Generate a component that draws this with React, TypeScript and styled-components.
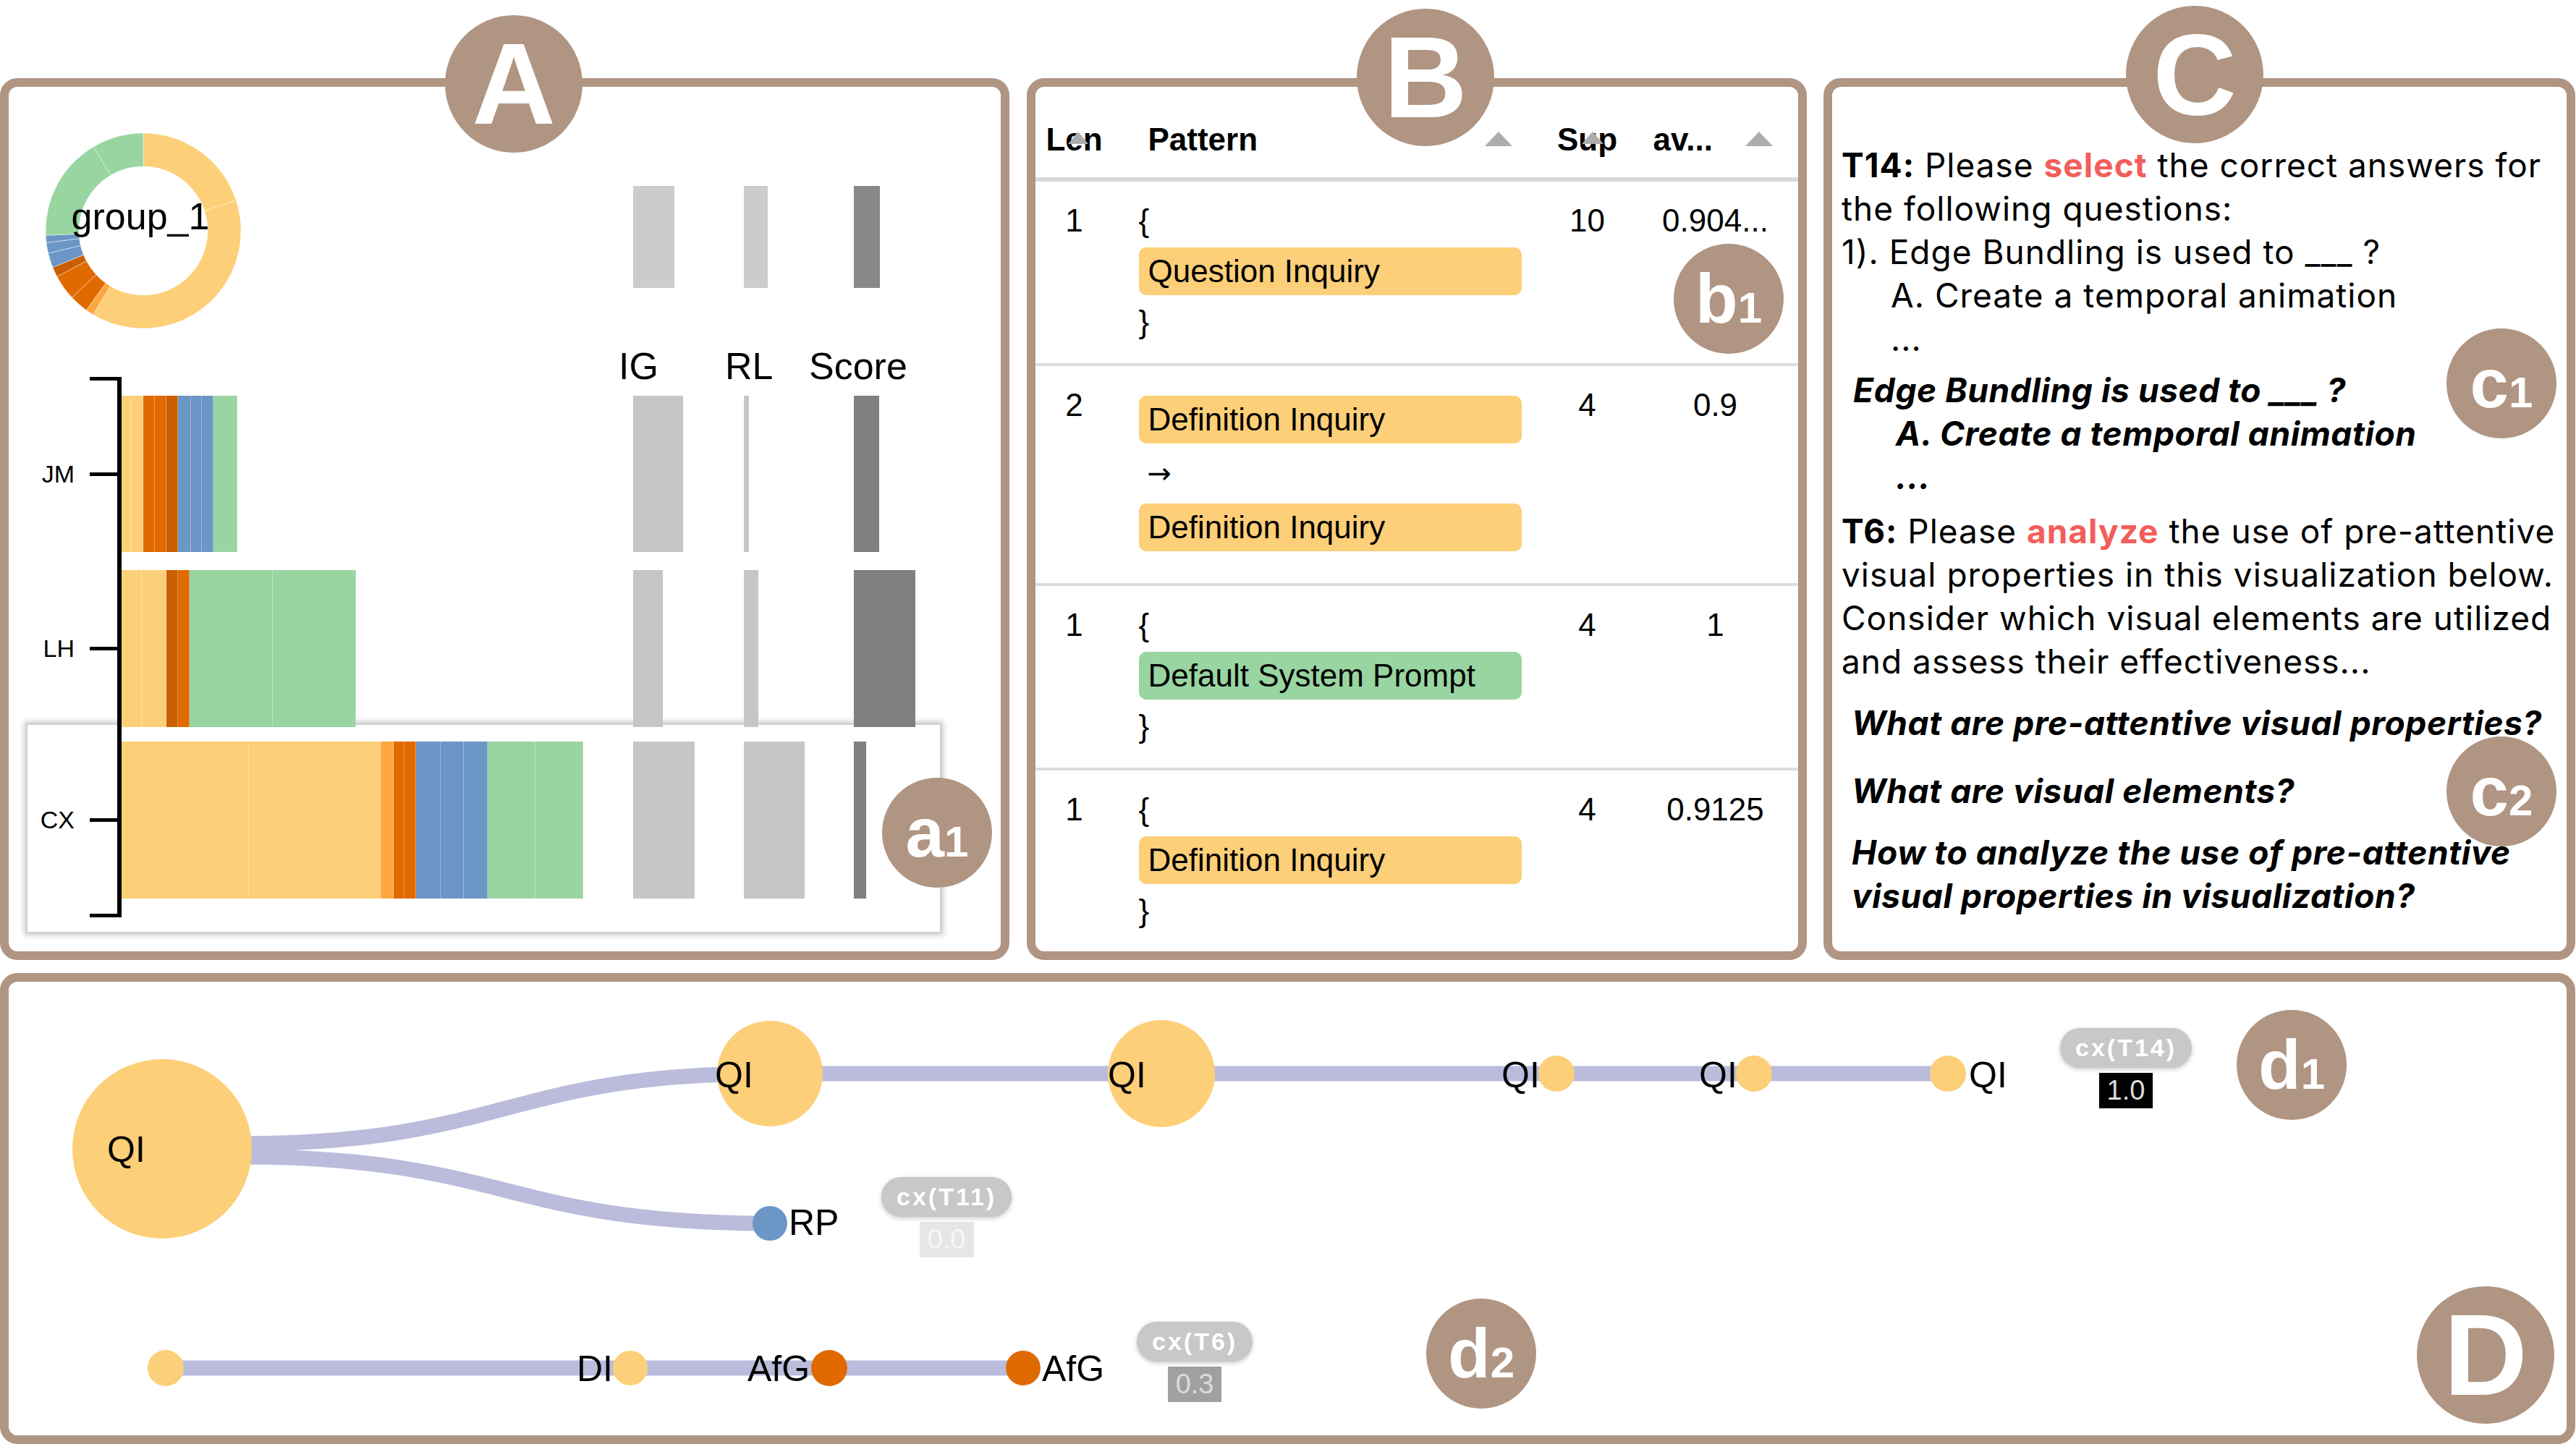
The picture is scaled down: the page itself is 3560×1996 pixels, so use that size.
import React from "react";
import styled, { createGlobalStyle, css } from "styled-components";

// Palette
const TAN = "#b09583";
const YELLOW = "#fdcf78";
const LIGHT_ORANGE = "#fda83f";
const ORANGE = "#e06900";
const DARK_ORANGE = "#c95f00";
const BLUE = "#6b96c6";
const GREEN = "#98d5a0";
const EDGE = "#bbbcdb";
const RED = "#f25e5b";

const GlobalStyle = createGlobalStyle`
  html, body {
    margin: 0;
    padding: 0;
    background: #fff;
  }

  body {
    width: 3560px;
    height: 1996px;
    overflow: hidden;
    color: #000;
    font-family: "Liberation Sans", Arial, sans-serif;
  }

  * {
    box-sizing: border-box;
  }
`;

const Page = styled.div`
  position: relative;
  width: 3560px;
  height: 1996px;
  padding: 108px 1px 0 0;
  display: flex;
  flex-direction: column;
  gap: 18px;
`;

const TopRow = styled.div`
  display: flex;
  justify-content: space-between;
  height: 1219px;
`;

const Panel = styled.section<{ $width: number; $height?: number }>`
  position: relative;
  flex: none;
  width: ${({ $width }) => $width}px;
  height: ${({ $height }) => ($height ? `${$height}px` : "100%")};
  border: 12px solid ${TAN};
  border-radius: 24px;
  background: #fff;
`;

// Round annotation markers (A, B, a1 ...)
const Marker = styled.div<{ $x: number; $y: number; $size: number; $font: number }>`
  position: absolute;
  z-index: 5;
  left: ${({ $x, $size }) => $x - $size / 2}px;
  top: ${({ $y, $size }) => $y - $size / 2}px;
  width: ${({ $size }) => $size}px;
  height: ${({ $size }) => $size}px;
  border-radius: 50%;
  background: ${TAN};
  color: #fff;
  display: flex;
  align-items: center;
  justify-content: center;
  font-family: "Liberation Sans", Arial, sans-serif;
  font-weight: bold;
  font-size: ${({ $font }) => $font}px;
  line-height: 1;

  small {
    font-size: ${({ $font }) => Math.round($font * 0.63)}px;
  }
`;

/* ---------------- Panel A ---------------- */

const chartColumns = css`
  display: grid;
  grid-template-columns: 112px 44px 707px 153px 152px 1fr;
`;

const PanelABody = styled.div`
  position: relative;
  padding-top: 63px;
`;

const GroupRow = styled.div`
  ${chartColumns};
  height: 270px;
  align-items: start;
`;

const DonutCell = styled.div`
  grid-column: 1 / 4;
  padding-left: 50px;

  svg {
    display: block;
  }
`;

const MetricBar = styled.div<{ $col: number; $row?: number; $color: string; $offset?: number }>`
  grid-column: ${({ $col }) => $col};
  grid-row: ${({ $row }) => $row ?? "auto"};
  margin-top: ${({ $offset }) => $offset ?? 0}px;
  height: ${({ $offset }) => ($offset ? "141px" : "100%")};
  background: ${({ $color }) => $color};
`;

const HeaderRow = styled.div`
  ${chartColumns};
  margin-top: 27px;
  font-size: 52px;
  line-height: 52px;
  height: 52px;
`;

const HeaderCell = styled.div<{ $col: number; $shift: number }>`
  grid-column: ${({ $col }) => $col};
  margin-left: ${({ $shift }) => $shift}px;
  white-space: nowrap;
`;

const RowsGrid = styled.div`
  ${chartColumns};
  position: relative;
  z-index: 1;
  margin-top: -11px;
  grid-template-rows: 26px 216px 25px 217px 20px 217px 26px;
`;

const Bracket = styled.div`
  grid-column: 2;
  grid-row: 1 / -1;
  border-top: 5px solid #000;
  border-bottom: 5px solid #000;
  border-right: 6px solid #000;
`;

const RowLabel = styled.div<{ $row: number }>`
  grid-column: 1;
  grid-row: ${({ $row }) => $row};
  align-self: center;
  justify-self: end;
  padding-right: 21px;
  font-size: 34px;
`;

const Tick = styled.div<{ $row: number }>`
  grid-column: 2;
  grid-row: ${({ $row }) => $row};
  align-self: center;
  width: 38px;
  height: 5px;
  background: #000;
`;

const StackBar = styled.div<{ $row: number }>`
  grid-column: 3;
  grid-row: ${({ $row }) => $row};
  display: flex;
  height: 100%;
`;

const Segment = styled.div<{ $color: string }>`
  flex: none;
  height: 100%;
  background: ${({ $color }) => $color};
  box-shadow: inset -1px 0 0 rgba(255, 255, 255, 0.35);
`;

const Highlight = styled.div`
  position: absolute;
  z-index: 0;
  left: 24px;
  top: 880px;
  width: 1265px;
  height: 290px;
  background: #fff;
  border: 2px solid #cfcfcf;
  box-shadow: 0 0 7px 3px rgba(0, 0, 0, 0.2);
`;

type Seg = [number, string];

const userRows: { name: string; segs: Seg[]; ig: number; rl: number; score: number }[] = [
  {
    name: "JM",
    segs: [
      [13, YELLOW], [17, YELLOW], [16, ORANGE], [16, ORANGE], [16, DARK_ORANGE],
      [18, BLUE], [15, BLUE], [16, BLUE], [33, GREEN],
    ],
    ig: 69,
    rl: 7,
    score: 35,
  },
  {
    name: "LH",
    segs: [[28, YELLOW], [34, YELLOW], [16, DARK_ORANGE], [16, ORANGE], [115, GREEN], [115, GREEN]],
    ig: 41,
    rl: 20,
    score: 85,
  },
  {
    name: "CX",
    segs: [
      [176, YELLOW], [182, YELLOW], [18, LIGHT_ORANGE], [15, ORANGE], [16, ORANGE],
      [34, BLUE], [32, BLUE], [33, BLUE], [66, GREEN], [66, GREEN],
    ],
    ig: 85,
    rl: 84,
    score: 17,
  },
];

const donutSlices: [number, number, string][] = [
  [0, 72, YELLOW],
  [72, 210.8, YELLOW],
  [210.8, 215.7, LIGHT_ORANGE],
  [215.7, 227, ORANGE],
  [227, 242, ORANGE],
  [242, 248, DARK_ORANGE],
  [248, 256.7, BLUE],
  [256.7, 263, BLUE],
  [263, 267.3, BLUE],
  [267.3, 329.5, GREEN],
  [329.5, 360, GREEN],
];

const arcPath = (c: number, r0: number, r1: number, a0: number, a1: number) => {
  const rad = (a: number) => (a * Math.PI) / 180;
  const pt = (r: number, a: number) =>
    `${(c + r * Math.sin(rad(a))).toFixed(2)},${(c - r * Math.cos(rad(a))).toFixed(2)}`;
  const large = a1 - a0 > 180 ? 1 : 0;
  return `M${pt(r1, a0)} A${r1},${r1} 0 ${large} 1 ${pt(r1, a1)} L${pt(r0, a1)} A${r0},${r0} 0 ${large} 0 ${pt(r0, a0)} Z`;
};

const Donut = () => (
  <svg width={272} height={272} viewBox="0 0 272 272">
    {donutSlices.map(([a0, a1, color], i) => (
      <path
        key={i}
        d={arcPath(136, 89, 135, a0, a1)}
        fill={color}
        stroke="rgba(255,255,255,0.45)"
        strokeWidth={1}
      />
    ))}
    <text x={132} y={134} textAnchor="middle" fontSize={52} fontFamily="Liberation Sans, Arial, sans-serif">
      group_1
    </text>
  </svg>
);

const PanelA = () => (
  <Panel $width={1395}>
    <PanelABody>
      <Highlight />
      <GroupRow>
        <DonutCell>
          <Donut />
        </DonutCell>
        <MetricBar $col={4} $color="#cccccc" $offset={74} style={{ width: 57 }} />
        <MetricBar $col={5} $color="#cccccc" $offset={74} style={{ width: 33 }} />
        <MetricBar $col={6} $color="#888888" $offset={74} style={{ width: 36 }} />
      </GroupRow>

      <HeaderRow>
        <HeaderCell $col={4} $shift={-20}>IG</HeaderCell>
        <HeaderCell $col={5} $shift={-26}>RL</HeaderCell>
        <HeaderCell $col={6} $shift={-62}>Score</HeaderCell>
      </HeaderRow>

      <RowsGrid>
        <Bracket />
        {userRows.map((row, i) => {
          const r = 2 + i * 2;
          return (
            <React.Fragment key={row.name}>
              <RowLabel $row={r}>{row.name}</RowLabel>
              <Tick $row={r} />
              <StackBar $row={r}>
                {row.segs.map(([w, color], j) => (
                  <Segment key={j} $color={color} style={{ width: w }} />
                ))}
              </StackBar>
              <MetricBar $col={4} $row={r} $color="#c6c6c6" style={{ width: row.ig }} />
              <MetricBar $col={5} $row={r} $color="#c6c6c6" style={{ width: row.rl }} />
              <MetricBar $col={6} $row={r} $color="#808080" style={{ width: row.score }} />
            </React.Fragment>
          );
        })}
      </RowsGrid>
    </PanelABody>
  </Panel>
);

/* ---------------- Panel B ---------------- */

const tableColumns = css`
  display: grid;
  grid-template-columns: 108px 592px 126px 1fr;
`;

const HeadRow = styled.div`
  ${tableColumns};
  height: 131px;
  padding-top: 48px;
  border-bottom: 6px solid #d9d9d9;
  font-weight: bold;
  font-size: 44px;
  line-height: 50px;
`;

const HeadCell = styled.div<{ $align: "left" | "center"; $pad?: number }>`
  position: relative;
  text-align: ${({ $align }) => $align};
  padding-left: ${({ $pad }) => $pad ?? 0}px;
  white-space: nowrap;
`;

const SortIcon = styled.span<{ $w: number; $h: number; $right: number }>`
  position: absolute;
  top: 14px;
  right: ${({ $right }) => $right}px;
  width: 0;
  height: 0;
  border-left: ${({ $w }) => $w / 2}px solid transparent;
  border-right: ${({ $w }) => $w / 2}px solid transparent;
  border-bottom: ${({ $h }) => $h}px solid #adadad;
`;

const BodyRow = styled.div`
  ${tableColumns};
  padding: 29px 0 32px;
  border-bottom: 4px solid #dddddd;
  font-size: 44px;
  line-height: 50px;

  &:last-child {
    border-bottom: none;
  }
`;

const NumCell = styled.div`
  text-align: center;
  white-space: nowrap;
`;

const PatternCell = styled.div`
  display: flex;
  flex-direction: column;
  align-items: flex-start;
  padding-left: 35px;
`;

const Brace = styled.div`
  line-height: 50px;
`;

const Arrow = styled.div`
  padding-left: 12px;
  font-family: "DejaVu Sans", sans-serif;
  font-size: 40px;
  line-height: 59px;
`;

const Tag = styled.div<{ $color: string }>`
  display: flex;
  align-items: center;
  width: 529px;
  height: 66px;
  margin: 12px 0;
  padding-left: 13px;
  border-radius: 10px;
  background: ${({ $color }) => $color};
  white-space: nowrap;
`;

type PatternItem = { kind: "open" | "close" | "arrow" } | { kind: "tag"; label: string; color: string };

const patterns: { len: string; items: PatternItem[]; sup: string; av: string }[] = [
  {
    len: "1",
    items: [{ kind: "open" }, { kind: "tag", label: "Question Inquiry", color: YELLOW }, { kind: "close" }],
    sup: "10",
    av: "0.904...",
  },
  {
    len: "2",
    items: [
      { kind: "tag", label: "Definition Inquiry", color: YELLOW },
      { kind: "arrow" },
      { kind: "tag", label: "Definition Inquiry", color: YELLOW },
    ],
    sup: "4",
    av: "0.9",
  },
  {
    len: "1",
    items: [{ kind: "open" }, { kind: "tag", label: "Default System Prompt", color: GREEN }, { kind: "close" }],
    sup: "4",
    av: "1",
  },
  {
    len: "1",
    items: [{ kind: "open" }, { kind: "tag", label: "Definition Inquiry", color: YELLOW }, { kind: "close" }],
    sup: "4",
    av: "0.9125",
  },
];

const renderItem = (item: PatternItem, i: number) => {
  if (item.kind === "tag") {
    return (
      <Tag key={i} $color={item.color}>
        {item.label}
      </Tag>
    );
  }
  if (item.kind === "arrow") return <Arrow key={i}>→</Arrow>;
  return <Brace key={i}>{item.kind === "open" ? "{" : "}"}</Brace>;
};

const PanelB = () => (
  <Panel $width={1078}>
    <HeadRow>
      <HeadCell $align="center">
        Len
        <SortIcon $w={28} $h={17} $right={35} />
      </HeadCell>
      <HeadCell $align="left" $pad={48}>
        Pattern
        <SortIcon $w={38} $h={20} $right={41} />
      </HeadCell>
      <HeadCell $align="center">
        Sup
        <SortIcon $w={30} $h={17} $right={41} />
      </HeadCell>
      <HeadCell $align="left" $pad={28}>
        av...
        <SortIcon $w={38} $h={20} $right={35} />
      </HeadCell>
    </HeadRow>

    {patterns.map((p, i) => (
      <BodyRow key={i}>
        <NumCell>{p.len}</NumCell>
        <PatternCell>{p.items.map(renderItem)}</PatternCell>
        <NumCell>{p.sup}</NumCell>
        <NumCell>{p.av}</NumCell>
      </BodyRow>
    ))}
  </Panel>
);

/* ---------------- Panel C ---------------- */

const TaskText = styled.div`
  padding: 78px 0 0 13px;
  font-family: Inter, "Liberation Sans", sans-serif;
  font-size: 46px;
  line-height: 60px;
  letter-spacing: 1px;
  white-space: nowrap;
`;

const Block = styled.div<{ $mt?: number; $indent?: number; $emphasis?: boolean }>`
  margin-top: ${({ $mt }) => $mt ?? 0}px;
  padding-left: ${({ $indent }) => $indent ?? 0}px;

  ${({ $emphasis }) =>
    $emphasis &&
    css`
      font-weight: bold;
      font-style: italic;
      letter-spacing: 0.6px;
    `}
`;

const Line = styled.div<{ $indent?: number; $mt?: number }>`
  padding-left: ${({ $indent }) => $indent ?? 0}px;
  margin-top: ${({ $mt }) => $mt ?? 0}px;
`;

const Strong = styled.b`
  font-weight: bold;
`;

const Verb = styled.b`
  font-weight: bold;
  color: ${RED};
`;

const PanelC = () => (
  <Panel $width={1039}>
    <TaskText>
      <Block>
        <Line>
          <Strong>T14:</Strong> Please <Verb>select</Verb> the correct answers for
        </Line>
        <Line>the following questions:</Line>
        <Line>1). Edge Bundling is used to ___ ?</Line>
        <Line $indent={68}>A. Create a temporal animation</Line>
        <Line $indent={68}>...</Line>
      </Block>

      <Block $mt={11} $indent={16} $emphasis>
        <Line>Edge Bundling is used to ___ ?</Line>
        <Line $indent={59}>A. Create a temporal animation</Line>
        <Line $indent={59}>...</Line>
      </Block>

      <Block $mt={15}>
        <Line>
          <Strong>T6:</Strong> Please <Verb>analyze</Verb> the use of pre-attentive
        </Line>
        <Line>visual properties in this visualization below.</Line>
        <Line>Consider which visual elements are utilized</Line>
        <Line>and assess their effectiveness...</Line>
      </Block>

      <Block $indent={14} $emphasis>
        <Line $mt={25}>What are pre-attentive visual properties?</Line>
        <Line $mt={34}>What are visual elements?</Line>
        <Line $mt={25}>How to analyze the use of pre-attentive</Line>
        <Line>visual properties in visualization?</Line>
      </Block>
    </TaskText>
  </Panel>
);

/* ---------------- Panel D ---------------- */

const Canvas = styled.svg`
  display: block;
  width: 100%;
  height: 100%;
  font-family: "Liberation Sans", Arial, sans-serif;
`;

const ScoreTag = styled.div<{ $x: number; $y: number }>`
  position: absolute;
  left: ${({ $x }) => $x}px;
  top: ${({ $y }) => $y}px;
  display: flex;
  flex-direction: column;
  align-items: center;
  gap: 7px;
`;

const Pill = styled.div`
  height: 55px;
  padding: 0 21px;
  border-radius: 28px;
  background: #c8c8c8;
  box-shadow: 0 2px 6px rgba(0, 0, 0, 0.22);
  color: #fff;
  font-weight: bold;
  font-size: 34px;
  line-height: 55px;
  letter-spacing: 3px;
  white-space: nowrap;
`;

const Value = styled.div<{ $bg: string; $fg: string }>`
  height: 49px;
  padding: 0 11px;
  background: ${({ $bg }) => $bg};
  color: ${({ $fg }) => $fg};
  font-size: 38px;
  line-height: 49px;
`;

const nodes: { x: number; y: number; r: number; color: string }[] = [
  { x: 224, y: 1588, r: 124, color: YELLOW },
  { x: 1064, y: 1484, r: 73, color: YELLOW },
  { x: 1605, y: 1484, r: 74, color: YELLOW },
  { x: 2151, y: 1484, r: 25, color: YELLOW },
  { x: 2424, y: 1484, r: 25, color: YELLOW },
  { x: 2692, y: 1484, r: 25, color: YELLOW },
  { x: 1064, y: 1691, r: 24, color: BLUE },
  { x: 229, y: 1891, r: 25, color: YELLOW },
  { x: 871, y: 1891, r: 24, color: YELLOW },
  { x: 1146, y: 1891, r: 25, color: ORANGE },
  { x: 1414, y: 1891, r: 24, color: ORANGE },
];

const labels: { x: number; y: number; text: string }[] = [
  { x: 148, y: 1606, text: "QI" },
  { x: 988, y: 1503, text: "QI" },
  { x: 1531, y: 1503, text: "QI" },
  { x: 2075, y: 1503, text: "QI" },
  { x: 2348, y: 1503, text: "QI" },
  { x: 2721, y: 1503, text: "QI" },
  { x: 1090, y: 1707, text: "RP" },
  { x: 797, y: 1909, text: "DI" },
  { x: 1033, y: 1909, text: "AfG" },
  { x: 1440, y: 1909, text: "AfG" },
];

const PanelD = () => (
  <Panel $width={3559} $height={651}>
    <Canvas viewBox="12 1357 3535 627">
      <g fill="none" stroke={EDGE} strokeWidth={21}>
        <path d="M330 1581 C697 1581 697 1484 1064 1484" />
        <path d="M330 1599 C697 1599 697 1691 1064 1691" />
        <path d="M1064 1484 L2692 1484" />
        <path d="M229 1891 L1414 1891" />
      </g>
      {nodes.map((n, i) => (
        <circle key={i} cx={n.x} cy={n.y} r={n.r} fill={n.color} />
      ))}
      {labels.map((l, i) => (
        <text key={i} x={l.x} y={l.y} fontSize={50} fill="#000">
          {l.text}
        </text>
      ))}
    </Canvas>

    <ScoreTag $x={1206} $y={270}>
      <Pill>cx(T11)</Pill>
      <Value $bg="#e6e6e6" $fg="#f7f7f7">0.0</Value>
    </ScoreTag>
    <ScoreTag $x={2835} $y={64}>
      <Pill>cx(T14)</Pill>
      <Value $bg="#000" $fg="#dedede">1.0</Value>
    </ScoreTag>
    <ScoreTag $x={1559} $y={470}>
      <Pill>cx(T6)</Pill>
      <Value $bg="#a0a0a0" $fg="#dcdcdc">0.3</Value>
    </ScoreTag>
  </Panel>
);

/* ---------------- App ---------------- */

const markers: { x: number; y: number; size: number; font: number; letter: string; sub?: string }[] = [
  { x: 710, y: 116, size: 190, font: 160, letter: "A" },
  { x: 1970, y: 107, size: 190, font: 160, letter: "B" },
  { x: 3033, y: 103, size: 190, font: 160, letter: "C" },
  { x: 3435, y: 1873, size: 190, font: 160, letter: "D" },
  { x: 1295, y: 1151, size: 152, font: 96, letter: "a", sub: "1" },
  { x: 2389, y: 413, size: 152, font: 96, letter: "b", sub: "1" },
  { x: 3457, y: 530, size: 152, font: 96, letter: "c", sub: "1" },
  { x: 3457, y: 1094, size: 152, font: 96, letter: "c", sub: "2" },
  { x: 3167, y: 1472, size: 152, font: 96, letter: "d", sub: "1" },
  { x: 2047, y: 1871, size: 152, font: 96, letter: "d", sub: "2" },
];

const App = () => (
  <>
    <GlobalStyle />
    <Page>
      <TopRow>
        <PanelA />
        <PanelB />
        <PanelC />
      </TopRow>
      <PanelD />

      {markers.map((m) => (
        <Marker key={m.letter + (m.sub ?? "")} $x={m.x} $y={m.y} $size={m.size} $font={m.font}>
          <span>
            {m.letter}
            {m.sub && <small>{m.sub}</small>}
          </span>
        </Marker>
      ))}
    </Page>
  </>
);

export default App;
